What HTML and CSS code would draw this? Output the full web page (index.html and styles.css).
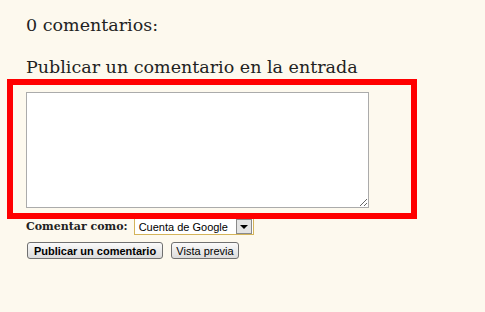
FILE: index.html
```html
<!DOCTYPE html>
<html>
<head>
<meta name="viewport" content="width=device-width, initial-scale=1">
<link rel="stylesheet" href="styles.css">
</head>
<body>

<div class="comments">
  <h4 class="count">0 comentarios:</h4>
  <h4 class="post-title">Publicar un comentario en la entrada</h4>

  <div class="form-box">
    <textarea class="comment-body"></textarea>
    <div class="highlight"></div>
  </div>

  <div class="identity">
    <span class="identity-label">Comentar como:</span>
    <div class="fake-select">
      <span class="fake-select-text">Cuenta de Google</span>
      <span class="fake-select-arrow"><span class="tri"></span></span>
    </div>
  </div>

  <div class="actions">
    <button class="btn btn-main">Publicar un comentario</button>
    <button class="btn btn-preview">Vista previa</button>
  </div>
</div>

</body>
</html>
```

FILE: styles.css
```css
body {
  margin: 0;
  background: #fdf9ee;
  font-family: 'DejaVu Serif', Georgia, serif;
  color: #222222;
}

.comments {
  padding: 13px 0 0 26px;
}

.count, .post-title {
  margin: 0;
  font-size: 17.5px;
  line-height: 24px;
  font-weight: normal;
}

.post-title {
  margin-top: 18px;
}

.form-box {
  position: relative;
  margin-top: 13px;
  width: 343px;
}

.comment-body {
  display: block;
  box-sizing: border-box;
  width: 343px;
  height: 116px;
  margin: 0;
  border: 1px solid #ababab;
  background: #ffffff;
}

/* red frame drawn over the form */
.highlight {
  position: absolute;
  top: -13px;
  left: -19px;
  width: 410px;
  height: 140px;
  box-sizing: border-box;
  border: 6px solid #ff0000;
}

.identity {
  display: flex;
  align-items: center;
  margin-top: 10px;
  height: 17px;
}

.identity-label {
  font-weight: bold;
  font-size: 11px;
  color: #222222;
  margin-right: 6px;
}

.fake-select {
  display: flex;
  align-items: center;
  box-sizing: border-box;
  width: 120px;
  height: 17px;
  border: 1px solid #d4b45a;
  background: #ffffff;
  font-family: 'Liberation Sans', Arial, sans-serif;
  font-size: 11px;
  color: #000000;
}

.fake-select-text {
  flex: 1;
  padding-left: 4px;
}

.fake-select-arrow {
  display: flex;
  align-items: center;
  justify-content: center;
  width: 14px;
  height: 13px;
  margin-right: 1px;
  border: 1px solid #8a8a8a;
  background: #e4e4e4;
}

.tri {
  width: 0;
  height: 0;
  border-left: 4px solid transparent;
  border-right: 4px solid transparent;
  border-top: 4px solid #000000;
}

.actions {
  display: flex;
  gap: 8px;
  margin-top: 7px;
  padding-left: 1px;
}

.btn {
  box-sizing: border-box;
  height: 17px;
  padding: 0 3px;
  border: 1px solid #707070;
  border-radius: 3px;
  background: linear-gradient(#fafafa, #dcdcdc);
  font-family: 'Liberation Sans', Arial, sans-serif;
  font-size: 11px;
  line-height: 14px;
  color: #000000;
  white-space: nowrap;
}

.btn-main {
  font-weight: bold;
  width: 136px;
}

.btn-preview {
  width: 68px;
}
```
